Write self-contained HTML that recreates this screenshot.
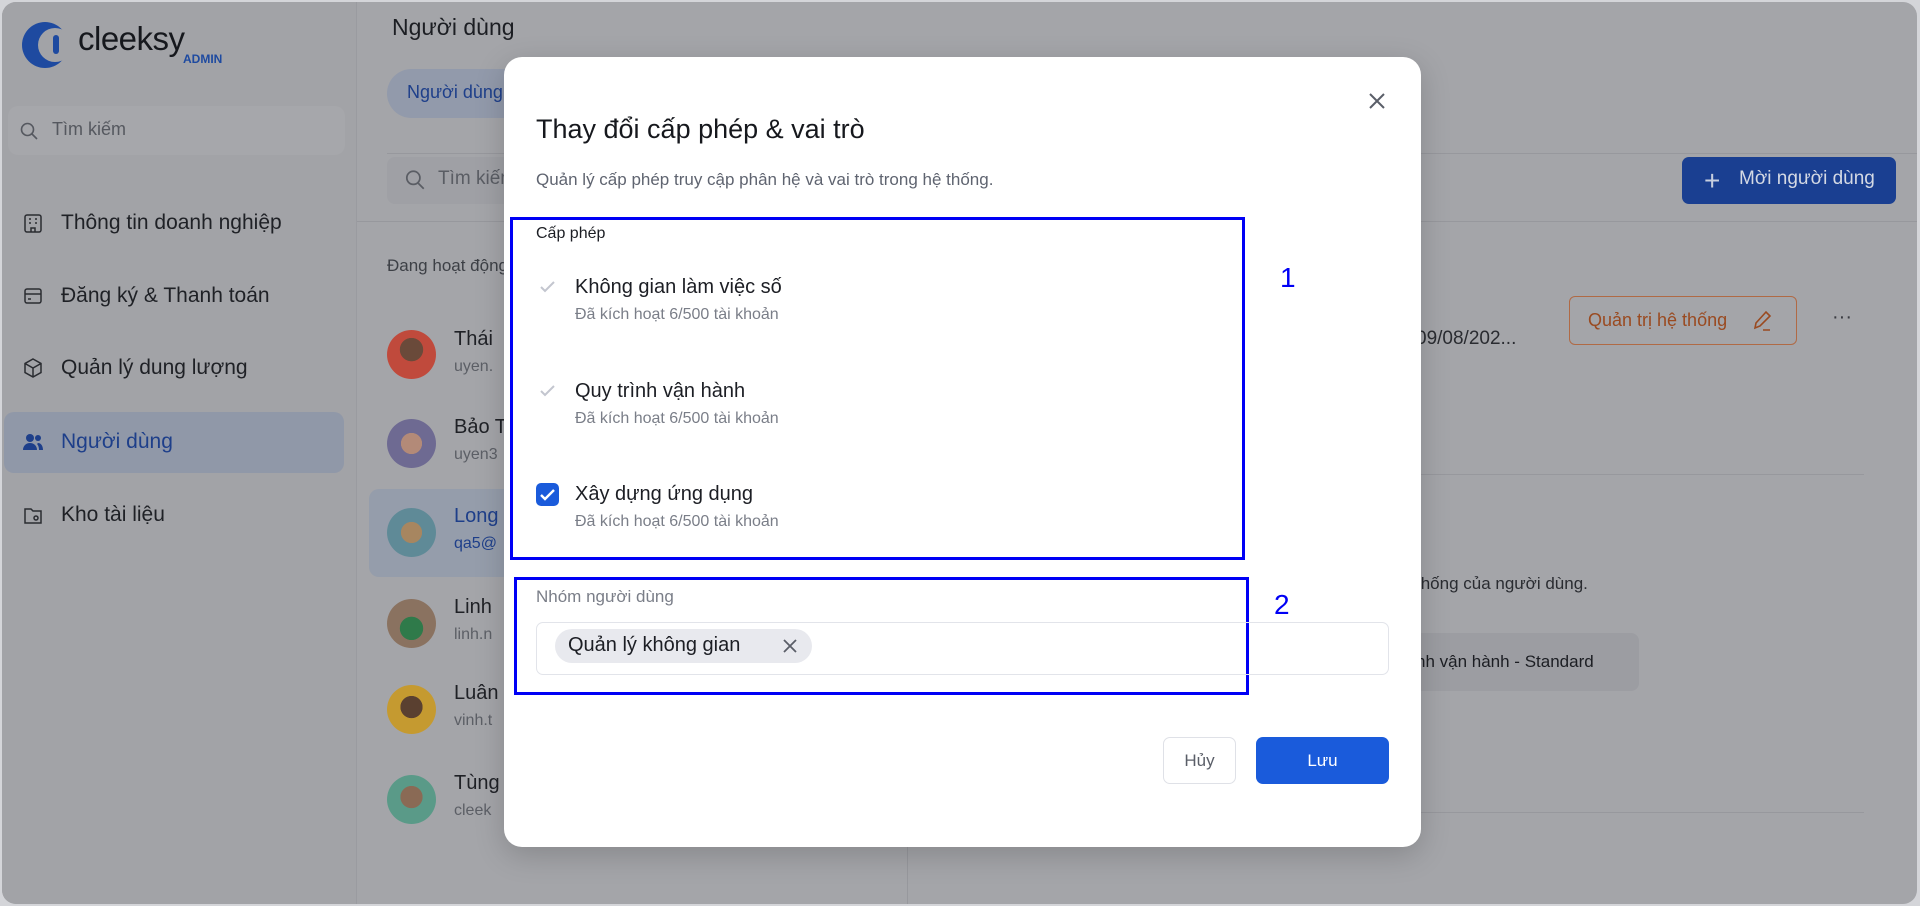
<!DOCTYPE html>
<html><head><meta charset="utf-8"><style>
*{box-sizing:border-box;margin:0;padding:0}
body{width:1920px;height:906px;overflow:hidden;background:#d4d5d9;font-family:"Liberation Sans",sans-serif;position:relative}
.frame{position:absolute;left:2px;top:2px;width:1915px;height:902px;border-radius:14px;background:#a4a5a9;overflow:hidden}
.side{position:absolute;left:0;top:0;width:355px;height:902px;background:#a2a3a7;border-right:1px solid #9a9ba0}
.a{position:absolute;white-space:nowrap}
.nav{position:absolute;left:59px;font-size:21px;color:#1f2126}
.ico{position:absolute;left:20px;width:22px;height:22px}
.hl{position:absolute;height:1px;background:#97989d}
.av{position:absolute;left:385px;width:49px;height:49px;border-radius:50%}
.nm{position:absolute;left:452px;font-size:20px;color:#1f2126;font-weight:500}
.em{position:absolute;left:452px;font-size:16px;color:#5c5f66}
.modal{position:absolute;left:502px;top:55px;width:917px;height:790px;background:#fff;border-radius:18px;box-shadow:0 8px 30px rgba(0,0,0,.18)}
.t{position:absolute;white-space:nowrap}
.cb{position:absolute;left:32px;width:23px;height:23px;border-radius:5px}
.it{position:absolute;left:71px;font-size:20px;color:#1c1e24}
.sub{position:absolute;left:71px;font-size:16px;color:#7a7e88}
</style></head><body>
<div class="frame">
 <div class="side">
  <svg class="a" style="left:19px;top:18px" width="46" height="50" viewBox="0 0 46 50"><circle cx="24" cy="25" r="23" fill="#1e4aa0"/><circle cx="34" cy="25" r="17" fill="#a2a3a7"/><rect x="32" y="15" width="6" height="19" rx="3" fill="#1e4aa0"/></svg>
  <div class="a" style="left:76px;top:18px;font-size:33px;color:#16181d;font-weight:500;letter-spacing:-0.5px">cleeksy</div>
  <div class="a" style="left:181px;top:50px;font-size:12px;color:#1e4aa0;font-weight:700">ADMIN</div>
  <div class="a" style="left:6px;top:104px;width:337px;height:49px;border-radius:10px;background:#a6a7ab"></div>
  <svg class="a" style="left:17px;top:119px" width="20" height="20" viewBox="0 0 20 20" fill="none" stroke="#55585f" stroke-width="1.6"><circle cx="8.5" cy="8.5" r="6"/><path d="M13 13l5 5"/></svg>
  <div class="a" style="left:50px;top:117px;font-size:18px;color:#55585f">Tìm kiếm</div>
  <svg class="ico" style="top:210px" viewBox="0 0 22 22" fill="none" stroke="#2a2c31" stroke-width="1.5"><rect x="3" y="3" width="16" height="17" rx="2"/><path d="M7 7h2M13 7h2M7 11h2M13 11h2M9 20v-4h4v4"/></svg>
  <div class="nav" style="top:209px">Thông tin doanh nghiệp</div>
  <svg class="ico" style="top:283px" viewBox="0 0 22 22" fill="none" stroke="#2a2c31" stroke-width="1.5"><rect x="3" y="4" width="16" height="14" rx="2"/><path d="M3 9h16M6 14h3"/></svg>
  <div class="nav" style="top:282px">Đăng ký &amp; Thanh toán</div>
  <svg class="ico" style="top:355px" viewBox="0 0 22 22" fill="none" stroke="#2a2c31" stroke-width="1.5"><path d="M11 2l8 4.5v9L11 20l-8-4.5v-9z M3 6.5l8 4.5 8-4.5 M11 11v9"/></svg>
  <div class="nav" style="top:354px">Quản lý dung lượng</div>
  <div class="a" style="left:2px;top:410px;width:340px;height:61px;border-radius:10px;background:#9098a8"></div>
  <svg class="ico" style="top:429px" viewBox="0 0 22 22" fill="#1e3f8a"><circle cx="8" cy="7" r="4"/><path d="M1 19c0-4 3-7 7-7s7 3 7 7z"/><circle cx="16" cy="7" r="3"/><path d="M16 12c3 0 5 3 5 7h-4c0-3-1-5-2-6z"/></svg>
  <div class="nav" style="top:428px;color:#1e3f8a;font-weight:500">Người dùng</div>
  <svg class="ico" style="top:502px" viewBox="0 0 22 22" fill="none" stroke="#2a2c31" stroke-width="1.5"><path d="M3 5h6l2 2h8v12H3z"/><circle cx="14" cy="14" r="2"/></svg>
  <div class="nav" style="top:501px">Kho tài liệu</div>
 </div>
 <div class="a" style="left:390px;top:12px;font-size:23px;color:#1c1e23;font-weight:500">Người dùng</div>
 <div class="a" style="left:385px;top:67px;width:140px;height:49px;border-radius:25px;background:#929aab"></div>
 <div class="a" style="left:405px;top:80px;font-size:18px;color:#1e3f8a;font-weight:500">Người dùng</div>
 <div class="hl" style="left:385px;top:151px;width:1535px"></div>
 <div class="a" style="left:385px;top:155px;width:200px;height:47px;border-radius:8px;background:#9fa0a5"></div>
 <svg class="a" style="left:402px;top:166px" width="22" height="24" viewBox="0 0 20 22" fill="none" stroke="#5a5d64" stroke-width="1.6"><circle cx="8.5" cy="9" r="6"/><path d="M13 14l5 5"/></svg>
 <div class="a" style="left:436px;top:166px;font-size:19px;color:#5a5d64">Tìm kiếm</div>
 <div class="a" style="left:1680px;top:155px;width:214px;height:47px;border-radius:7px;background:#1a3f91"></div>
 <div class="a" style="left:1702px;top:163px;font-size:28px;color:#c8cfdf;font-weight:300">+</div>
 <div class="a" style="left:1737px;top:166px;font-size:19px;color:#d4d9e4;font-weight:500">Mời người dùng</div>
 <div class="hl" style="left:355px;top:219px;width:1560px"></div>
 <div class="a" style="left:385px;top:254px;font-size:17px;color:#3d4046">Đang hoạt động</div>
 <div class="a" style="left:367px;top:487px;width:160px;height:88px;border-radius:10px;background:#959dab"></div>
 <div class="av" style="top:328px;background:radial-gradient(circle at 50% 40%,#6a4a3a 0 30%,#c04a3c 31%)"></div>
 <div class="nm" style="top:326px">Thái</div><div class="em" style="top:356px">uyen.</div>
 <div class="av" style="top:417px;background:radial-gradient(circle at 50% 50%,#b38a78 0 30%,#6e6a92 31%)"></div>
 <div class="nm" style="top:414px">Bảo T</div><div class="em" style="top:444px">uyen3</div>
 <div class="av" style="top:506px;background:radial-gradient(circle at 50% 50%,#a78660 0 30%,#5f8a97 31%)"></div>
 <div class="nm" style="top:503px;color:#1e3f8a">Long</div><div class="em" style="top:533px;color:#1e3f8a">qa5@</div>
 <div class="av" style="top:597px;background:radial-gradient(circle at 50% 60%,#2f7a4a 0 30%,#8a7260 31%)"></div>
 <div class="nm" style="top:594px">Linh</div><div class="em" style="top:624px">linh.n</div>
 <div class="av" style="top:683px;background:radial-gradient(circle at 50% 45%,#5a4030 0 30%,#c59a30 31%)"></div>
 <div class="nm" style="top:680px">Luân</div><div class="em" style="top:710px">vinh.t</div>
 <div class="av" style="top:773px;background:radial-gradient(circle at 50% 45%,#8a6a55 0 30%,#5a9a88 31%)"></div>
 <div class="nm" style="top:770px">Tùng</div><div class="em" style="top:800px">cleek</div>
 <div class="a" style="left:905px;top:220px;width:1px;height:682px;background:#97989d"></div>
 <div class="a" style="left:1414px;top:326px;font-size:19px;color:#2a2c31">09/08/202...</div>
 <div class="a" style="left:1567px;top:294px;width:228px;height:49px;border:1px solid #b06a45;border-radius:6px"></div>
 <div class="a" style="left:1586px;top:308px;font-size:18px;color:#9a4a20;font-weight:500">Quản trị hệ thống</div>
 <svg class="a" style="left:1748px;top:306px" width="24" height="26" viewBox="0 0 24 26" fill="none" stroke="#9a4a20" stroke-width="1.6"><path d="M5 20l1-5L16 4l4 4L10 18z M13 22h7"/></svg>
 <div class="a" style="left:1830px;top:304px;font-size:20px;color:#3a3c42">···</div>
 <div class="hl" style="left:906px;top:472px;width:956px"></div>
 <div class="a" style="left:1414px;top:572px;font-size:17px;color:#2a2c31">thống của người dùng.</div>
 <div class="a" style="left:1396px;top:631px;width:241px;height:58px;border-radius:8px;background:#9c9da2"></div>
 <div class="a" style="left:1414px;top:650px;font-size:17px;color:#1c1e23">nh vận hành - Standard</div>
 <div class="hl" style="left:906px;top:810px;width:956px"></div>

 <div class="modal">
  <div class="t" style="left:32px;top:57px;font-size:27px;color:#16181d;font-weight:500">Thay đổi cấp phép &amp; vai trò</div>
  <svg class="t" style="left:863px;top:34px" width="20" height="20" viewBox="0 0 20 20" stroke="#5a5e68" stroke-width="2"><path d="M3 3l14 14M17 3L3 17"/></svg>
  <div class="t" style="left:32px;top:113px;font-size:17px;color:#5f6470">Quản lý cấp phép truy cập phân hệ và vai trò trong hệ thống.</div>
  <div class="t" style="left:6px;top:160px;width:735px;height:343px;border:3px solid #0000f5"></div>
  <div class="t" style="left:32px;top:168px;font-size:16px;color:#1c1e24;font-weight:500">Cấp phép</div>
  <svg class="cb" style="top:218px" viewBox="0 0 23 23" fill="none" stroke="#c3c6cf" stroke-width="2"><path d="M5 12l4 4 9-9"/></svg>
  <div class="it" style="top:219px">Không gian làm việc số</div>
  <div class="sub" style="top:249px">Đã kích hoạt 6/500 tài khoản</div>
  <svg class="cb" style="top:322px" viewBox="0 0 23 23" fill="none" stroke="#c3c6cf" stroke-width="2"><path d="M5 12l4 4 9-9"/></svg>
  <div class="it" style="top:323px">Quy trình vận hành</div>
  <div class="sub" style="top:353px">Đã kích hoạt 6/500 tài khoản</div>
  <svg class="cb" style="top:426px;background:#1a5bdb" viewBox="0 0 23 23" fill="none" stroke="#fff" stroke-width="2.4"><path d="M5 12l4 4 9-9"/></svg>
  <div class="it" style="top:426px">Xây dựng ứng dụng</div>
  <div class="sub" style="top:456px">Đã kích hoạt 6/500 tài khoản</div>
  <div class="t" style="left:776px;top:205px;font-size:28px;color:#0000f5">1</div>
  <div class="t" style="left:10px;top:520px;width:735px;height:118px;border:3px solid #0000f5"></div>
  <div class="t" style="left:770px;top:532px;font-size:28px;color:#0000f5">2</div>
  <div class="t" style="left:32px;top:530px;font-size:17px;color:#7a7e88">Nhóm người dùng</div>
  <div class="t" style="left:32px;top:565px;width:853px;height:53px;border:1px solid #e2e4ea;border-radius:7px"></div>
  <div class="t" style="left:51px;top:572px;width:257px;height:34px;border-radius:17px;background:#e8e9ee"></div>
  <div class="t" style="left:64px;top:577px;font-size:20px;color:#1c1e24;font-weight:500">Quản lý không gian</div>
  <svg class="t" style="left:278px;top:581px" width="16" height="16" viewBox="0 0 16 16" stroke="#5a5e68" stroke-width="1.8"><path d="M2 2l12 12M14 2L2 14"/></svg>
  <div class="t" style="left:659px;top:680px;width:73px;height:47px;border:1px solid #dfe1e7;border-radius:7px;font-size:17px;color:#5a5e68;text-align:center;line-height:45px">Hủy</div>
  <div class="t" style="left:752px;top:680px;width:133px;height:47px;border-radius:7px;background:#1a5bdb;font-size:17px;color:#fff;text-align:center;line-height:47px;font-weight:500">Lưu</div>
 </div>
</div>
</body></html>
